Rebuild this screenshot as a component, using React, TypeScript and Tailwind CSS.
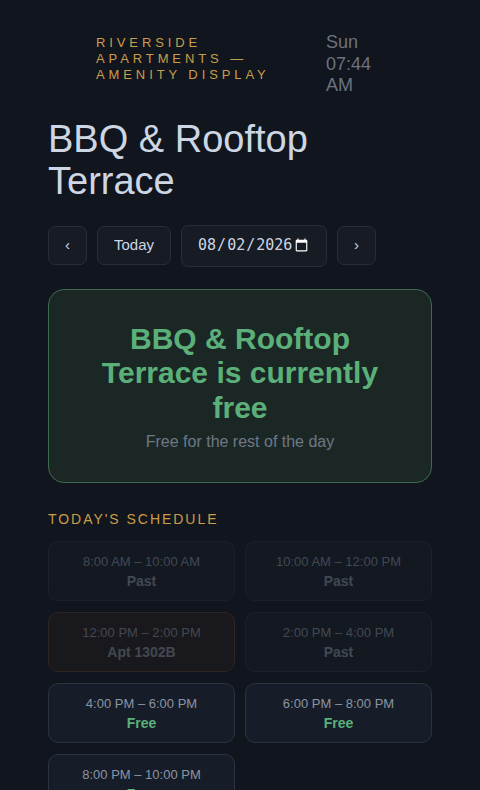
import { useState } from 'react'

type Slot = {
  time: string
  label: string
  state: 'past' | 'booked' | 'free'
}

const slots: Slot[] = [
  { time: '8:00 AM – 10:00 AM', label: 'Past', state: 'past' },
  { time: '10:00 AM – 12:00 PM', label: 'Past', state: 'past' },
  { time: '12:00 PM – 2:00 PM', label: 'Apt 1302B', state: 'booked' },
  { time: '2:00 PM – 4:00 PM', label: 'Past', state: 'past' },
  { time: '4:00 PM – 6:00 PM', label: 'Free', state: 'free' },
  { time: '6:00 PM – 8:00 PM', label: 'Free', state: 'free' },
  { time: '8:00 PM – 10:00 PM', label: 'Free', state: 'free' },
]

const cardStyles = {
  past: 'opacity-40 bg-[#171d28] border-[#2b3342]',
  booked: 'opacity-40 bg-[#261e1c] border-[#5e3d2c]',
  free: 'bg-[#171d28] border-[#2b3342]',
}

function SlotCard({ slot }: { slot: Slot }) {
  return (
    <div
      className={`h-[60px] rounded-[10px] border px-2 pt-[11px] pb-[9px] text-center ${cardStyles[slot.state]}`}
    >
      <div className="text-[13px] leading-[18px] text-[#8a94a3]">{slot.time}</div>
      <div
        className={`text-[14px] font-bold leading-[20px] ${
          slot.state === 'free' ? 'text-[#5bb07a]' : 'text-[#8a94a3]'
        }`}
      >
        {slot.label}
      </div>
    </div>
  )
}

export default function App() {
  const [date, setDate] = useState('2026-08-02')

  return (
    <div className="min-h-[790px] bg-[#11151d] px-12 pt-[35px] pb-10 font-['Liberation_Sans',Arial,sans-serif]">
      {/* Header */}
      <div className="flex items-start pl-12">
        <div className="w-[200px] text-[13px] uppercase leading-[16px] tracking-[0.3em] text-[#c99d4b]">
          Riverside Apartments — Amenity Display
        </div>
        <div className="-mt-[3px] ml-[30px] w-[50px] text-[18px] leading-[21.5px] text-[#6b7380]">
          Sun 07:44 AM
        </div>
      </div>

      {/* Title */}
      <h1 className="mt-[21px] text-[38px] leading-[42px] font-normal text-[#cdd6e3]">
        BBQ &amp; Rooftop Terrace
      </h1>

      {/* Date controls */}
      <div className="mt-[23px] flex items-center gap-[10px]">
        <button className="h-[39px] w-[39px] rounded-[7px] border border-[#272d38] bg-[#161b24] text-[15px] text-[#cdd6e3]">
          ‹
        </button>
        <button className="h-[39px] rounded-[7px] border border-[#272d38] bg-[#161b24] px-4 text-[15px] text-[#cdd6e3]">
          Today
        </button>
        <input
          type="date"
          value={date}
          onChange={(e) => setDate(e.target.value)}
          className="h-[42px] w-[146px] rounded-[7px] border border-[#272d38] bg-[#161b24] px-[15px] font-['DejaVu_Sans_Mono',monospace] text-[15px] text-[#cdd6e3] [color-scheme:dark]"
        />
        <button className="h-[39px] w-[39px] rounded-[7px] border border-[#272d38] bg-[#161b24] text-[15px] text-[#cdd6e3]">
          ›
        </button>
      </div>

      {/* Status card */}
      <div className="mt-[22px] rounded-[16px] border border-[#3d6b4e] bg-[#1b2725] px-8 pt-[32px] pb-[28px] text-center">
        <div className="text-[30px] font-bold leading-[34.5px] text-[#5bb07a]">
          BBQ &amp; Rooftop Terrace is currently free
        </div>
        <div className="mt-[5px] text-[16px] leading-[24px] text-[#6e7885]">
          Free for the rest of the day
        </div>
      </div>

      {/* Schedule */}
      <div className="mt-[27px] text-[14px] uppercase leading-[18px] tracking-[0.14em] text-[#c99d4b]">
        Today&apos;s Schedule
      </div>
      <div className="mt-[13px] grid grid-cols-2 gap-x-[10px] gap-y-[11px]">
        {slots.map((s) => (
          <SlotCard key={s.time} slot={s} />
        ))}
      </div>
    </div>
  )
}
